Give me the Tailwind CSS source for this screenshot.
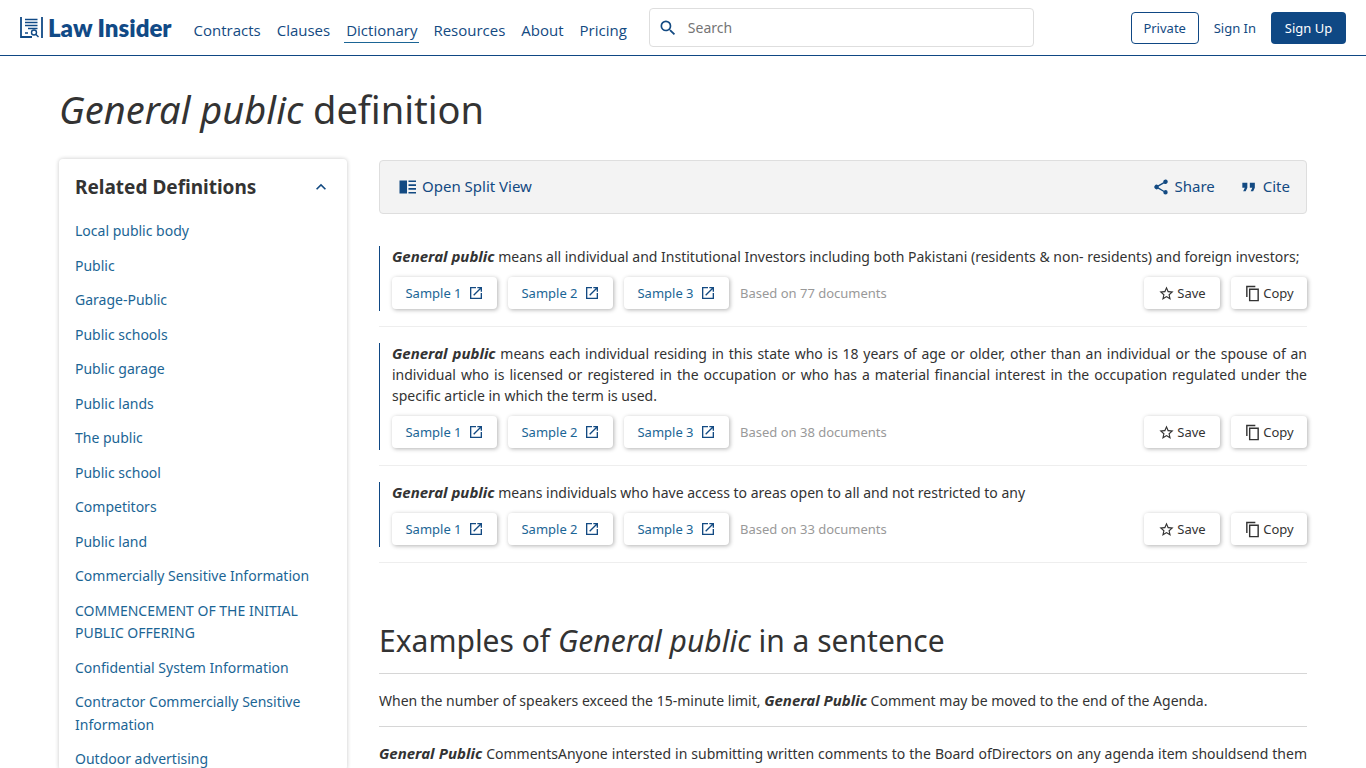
<!DOCTYPE html>
<html lang="en">
<head>
    <meta charset="UTF-8">
    <meta name="viewport" content="width=device-width, initial-scale=1.0">
    <title>General public Definition | Law Insider</title>
    <script src="https://cdn.jsdelivr.net/npm/@tailwindcss/browser@4"></script>
</head>
<body class="bg-white text-[#333] text-sm font-['Noto_Sans',sans-serif] h-screen overflow-hidden">

    <!-- Icons -->
    <svg class="hidden">
        <symbol id="icon-open" viewBox="0 0 24 24"><path d="M19 19H5V5h7V3H3v18h18v-9h-2v7zM14 3v2h3.600l-9.800 9.800 1.400 1.400L19 6.400V10h2V3h-7z"/></symbol>
        <symbol id="icon-star" viewBox="0 0 24 24"><path d="M22 9.240l-7.190-.62L12 2 9.190 8.630 2 9.240l5.460 4.730L5.820 21 12 17.270 18.180 21l-1.630-7.030L22 9.240zM12 15.400l-3.760 2.270 1-4.280-3.320-2.880 4.380-.38L12 6.100l1.710 4.040 4.380.38-3.320 2.880 1 4.280L12 15.400z"/></symbol>
        <symbol id="icon-copy" viewBox="0 0 24 24"><path d="M16 1H3v16h2V3h11V1zm5 4H7v18h14V5zm-2 16H9V7h10v14z"/></symbol>
    </svg>

    <header class="h-14 border-b border-[#0f4884] flex items-start text-[#134a82]">
        <a href="#" class="flex items-center ml-5 mt-3 h-8 text-[#114a86]">
            <svg class="w-6 h-6" viewBox="0 0 24 24" fill="none" stroke="currentColor">
                <path d="M1 1v20h11M22 1v21" stroke-width="1.800"/>
                <path d="M5 3.500h12.500M5 6.500h12.500M5 9.500h12.500M8 12.500h9.500M5 17h3" stroke-width="1.300"/>
                <circle cx="14" cy="16.500" r="2.500" stroke-width="1.400"/>
                <path d="M16 18.500l2.500 2.500" stroke-width="1.400"/>
            </svg>
            <span class="ml-1 text-2xl font-extrabold font-['Lato',sans-serif]">Law Insider</span>
        </a>
        <nav class="flex gap-3 ml-5 mt-[18px] text-[15px] leading-6 font-['Open_Sans',sans-serif]">
            <a href="#" class="px-[2px]">Contracts</a>
            <a href="#" class="px-[2px]">Clauses</a>
            <a href="#" class="px-[2px] border-b border-[#1b6595]">Dictionary</a>
            <a href="#" class="px-[2px]">Resources</a>
            <a href="#" class="px-[2px]">About</a>
            <a href="#" class="px-[2px]">Pricing</a>
        </nav>
        <label class="ml-5 mt-2 w-[385px] h-[39px] border border-[#dedede] rounded flex items-center">
            <svg class="w-5 h-5 ml-2" viewBox="0 0 24 24" fill="currentColor"><path d="M15.500 14h-.79l-.28-.27A6.470 6.470 0 0 0 16 9.500 6.500 6.500 0 1 0 9.500 16c1.610 0 3.090-.59 4.230-1.570l.27.28v.79l5 4.990L20.490 19l-4.990-5zm-6 0C7.010 14 5 11.990 5 9.500S7.010 5 9.500 5 14 7.010 14 9.500 11.990 14 9.500 14z"/></svg>
            <input type="text" aria-label="Search" placeholder="Search" class="ml-[10px] flex-1 text-sm outline-none placeholder:text-[#757575]">
        </label>
        <div class="flex items-center ml-auto mr-5 mt-3 text-[13px]">
            <button class="h-8 w-[68px] border border-[#0f4884] rounded">Private</button>
            <a href="#" class="mx-[15px]">Sign In</a>
            <button class="h-8 w-[75px] rounded bg-[#0f4884] text-white">Sign Up</button>
        </div>
    </header>

    <main class="max-w-[1280px] mx-auto px-4">
        <h1 class="mt-[27px] text-[38px] leading-[52px]"><em>General public</em> definition</h1>

        <div class="mt-6 flex items-start gap-8">
            <!-- Related definitions -->
            <aside class="w-72 shrink-0 rounded px-4 pt-3 shadow-[0_0_4px_rgba(0,0,0,0.22)]">
                <div class="flex items-center justify-between">
                    <h2 class="text-[19px] leading-8 font-bold">Related Definitions</h2>
                    <button aria-label="Collapse" class="text-[#134a82]">
                        <svg class="w-5 h-5" viewBox="0 0 24 24" fill="currentColor"><path d="M12 8l-6 6 1.410 1.410L12 10.830l4.590 4.580L18 14z"/></svg>
                    </button>
                </div>
                <ul class="mt-4 grid gap-3 text-[15px] leading-normal text-[#1b6595]">
                    <li><a href="#" class="text-sm">Local public body</a></li>
                    <li><a href="#" class="text-sm">Public</a></li>
                    <li><a href="#" class="text-sm">Garage-Public</a></li>
                    <li><a href="#" class="text-sm">Public schools</a></li>
                    <li><a href="#" class="text-sm">Public garage</a></li>
                    <li><a href="#" class="text-sm">Public lands</a></li>
                    <li><a href="#" class="text-sm">The public</a></li>
                    <li><a href="#" class="text-sm">Public school</a></li>
                    <li><a href="#" class="text-sm">Competitors</a></li>
                    <li><a href="#" class="text-sm">Public land</a></li>
                    <li><a href="#" class="text-sm">Commercially Sensitive Information</a></li>
                    <li><a href="#" class="text-sm">COMMENCEMENT OF THE INITIAL PUBLIC OFFERING</a></li>
                    <li><a href="#" class="text-sm">Confidential System Information</a></li>
                    <li><a href="#" class="text-sm">Contractor Commercially Sensitive Information</a></li>
                    <li><a href="#" class="text-sm">Outdoor advertising</a></li>
                </ul>
            </aside>

            <section class="flex-1 min-w-0 pt-px">
                <!-- Toolbar -->
                <div class="h-[54px] px-4 border border-[#dedede] rounded bg-[#f3f3f3] text-[#134a82] flex items-center text-[15px]">
                    <button class="flex items-center gap-1 ml-[2px]">
                        <svg class="w-5 h-5" viewBox="0 0 20 20" fill="currentColor"><path d="M1.500 3.500H9v13H1.500zM10.500 3.500H18V5h-7.500zM10.500 7.300H18v1.600h-7.500zM10.500 11.100H18v1.600h-7.500zM10.500 15H18v1.500h-7.500z"/></svg>
                        Open Split View
                    </button>
                    <button class="flex items-center gap-1 ml-auto">
                        <svg class="w-[18px] h-[18px]" viewBox="0 0 24 24" fill="currentColor"><path d="M18 16.080c-.76 0-1.440.3-1.960.77L8.910 12.700c.05-.23.09-.46.09-.7s-.04-.47-.09-.7l7.050-4.110A3 3 0 1 0 15 5c0 .24.04.47.09.7L8.040 9.810a3 3 0 1 0 0 4.380l7.120 4.160c-.05.21-.08.43-.08.650a2.920 2.920 0 1 0 2.920-2.920z"/></svg>
                        Share
                    </button>
                    <button class="flex items-center gap-1 ml-6">
                        <svg class="w-5 h-5" viewBox="0 0 24 24" fill="currentColor"><path d="M5 17h3l2-4V7H4v6h3zm9 0h3l2-4V7h-6v6h3z"/></svg>
                        Cite
                    </button>
                </div>

                <!-- Definitions -->
                <div class="mt-8 grid gap-4">
                    <article class="border-b border-[#eee] pb-[15px]">
                        <div class="border-l border-[#0f4884] pl-3 pb-[2px]">
                            <p class="leading-[21px] text-justify"><b class="text-[15px] italic">General public</b> means all individual and Institutional Investors including both Pakistani (residents &amp; non- residents) and foreign investors;</p>
                            <div class="mt-[10px] flex items-center gap-[11px] text-[13px]">
                                <a href="#" class="w-[105px] h-8 rounded shadow-[1px_1px_4px_rgba(0,0,0,0.3)] flex items-center justify-center gap-[6px] text-[#1b6595]">Sample 1 <svg class="w-4 h-4 fill-[#134a82]"><use href="#icon-open"/></svg></a>
                                <a href="#" class="w-[105px] h-8 rounded shadow-[1px_1px_4px_rgba(0,0,0,0.3)] flex items-center justify-center gap-[6px] text-[#1b6595]">Sample 2 <svg class="w-4 h-4 fill-[#134a82]"><use href="#icon-open"/></svg></a>
                                <a href="#" class="w-[105px] h-8 rounded shadow-[1px_1px_4px_rgba(0,0,0,0.3)] flex items-center justify-center gap-[6px] text-[#1b6595]">Sample 3 <svg class="w-4 h-4 fill-[#134a82]"><use href="#icon-open"/></svg></a>
                                <span class="text-[#999]">Based on 77 documents</span>
                                <button class="ml-auto w-[76px] h-8 rounded shadow-[1px_1px_4px_rgba(0,0,0,0.3)] flex items-center justify-center gap-[2px]"><svg class="w-[17px] h-[17px] fill-[#333]"><use href="#icon-star"/></svg>Save</button>
                                <button class="w-[76px] h-8 rounded shadow-[1px_1px_4px_rgba(0,0,0,0.3)] flex items-center justify-center gap-[2px]"><svg class="w-[17px] h-[17px] fill-[#333]"><use href="#icon-copy"/></svg>Copy</button>
                            </div>
                        </div>
                    </article>
                    <article class="border-b border-[#eee] pb-[15px]">
                        <div class="border-l border-[#0f4884] pl-3 pb-[2px]">
                            <p class="leading-[21px] text-justify"><b class="text-[15px] italic">General public</b> means each individual residing in this state who is 18 years of age or older, other than an individual or the spouse of an individual who is licensed or registered in the occupation or who has a material financial interest in the occupation regulated under the specific article in which the term is used.</p>
                            <div class="mt-[10px] flex items-center gap-[11px] text-[13px]">
                                <a href="#" class="w-[105px] h-8 rounded shadow-[1px_1px_4px_rgba(0,0,0,0.3)] flex items-center justify-center gap-[6px] text-[#1b6595]">Sample 1 <svg class="w-4 h-4 fill-[#134a82]"><use href="#icon-open"/></svg></a>
                                <a href="#" class="w-[105px] h-8 rounded shadow-[1px_1px_4px_rgba(0,0,0,0.3)] flex items-center justify-center gap-[6px] text-[#1b6595]">Sample 2 <svg class="w-4 h-4 fill-[#134a82]"><use href="#icon-open"/></svg></a>
                                <a href="#" class="w-[105px] h-8 rounded shadow-[1px_1px_4px_rgba(0,0,0,0.3)] flex items-center justify-center gap-[6px] text-[#1b6595]">Sample 3 <svg class="w-4 h-4 fill-[#134a82]"><use href="#icon-open"/></svg></a>
                                <span class="text-[#999]">Based on 38 documents</span>
                                <button class="ml-auto w-[76px] h-8 rounded shadow-[1px_1px_4px_rgba(0,0,0,0.3)] flex items-center justify-center gap-[2px]"><svg class="w-[17px] h-[17px] fill-[#333]"><use href="#icon-star"/></svg>Save</button>
                                <button class="w-[76px] h-8 rounded shadow-[1px_1px_4px_rgba(0,0,0,0.3)] flex items-center justify-center gap-[2px]"><svg class="w-[17px] h-[17px] fill-[#333]"><use href="#icon-copy"/></svg>Copy</button>
                            </div>
                        </div>
                    </article>
                    <article class="border-b border-[#eee] pb-[15px]">
                        <div class="border-l border-[#0f4884] pl-3 pb-[2px]">
                            <p class="leading-[21px] text-justify"><b class="text-[15px] italic">General public</b> means individuals who have access to areas open to all and not restricted to any</p>
                            <div class="mt-[10px] flex items-center gap-[11px] text-[13px]">
                                <a href="#" class="w-[105px] h-8 rounded shadow-[1px_1px_4px_rgba(0,0,0,0.3)] flex items-center justify-center gap-[6px] text-[#1b6595]">Sample 1 <svg class="w-4 h-4 fill-[#134a82]"><use href="#icon-open"/></svg></a>
                                <a href="#" class="w-[105px] h-8 rounded shadow-[1px_1px_4px_rgba(0,0,0,0.3)] flex items-center justify-center gap-[6px] text-[#1b6595]">Sample 2 <svg class="w-4 h-4 fill-[#134a82]"><use href="#icon-open"/></svg></a>
                                <a href="#" class="w-[105px] h-8 rounded shadow-[1px_1px_4px_rgba(0,0,0,0.3)] flex items-center justify-center gap-[6px] text-[#1b6595]">Sample 3 <svg class="w-4 h-4 fill-[#134a82]"><use href="#icon-open"/></svg></a>
                                <span class="text-[#999]">Based on 33 documents</span>
                                <button class="ml-auto w-[76px] h-8 rounded shadow-[1px_1px_4px_rgba(0,0,0,0.3)] flex items-center justify-center gap-[2px]"><svg class="w-[17px] h-[17px] fill-[#333]"><use href="#icon-star"/></svg>Save</button>
                                <button class="w-[76px] h-8 rounded shadow-[1px_1px_4px_rgba(0,0,0,0.3)] flex items-center justify-center gap-[2px]"><svg class="w-[17px] h-[17px] fill-[#333]"><use href="#icon-copy"/></svg>Copy</button>
                            </div>
                        </div>
                    </article>
                </div>

                <!-- Examples -->
                <h2 class="mt-14 pb-[10px] border-b border-[#d6d6d6] text-3xl leading-[44px]">Examples of <em>General public</em> in a sentence</h2>
                <p class="pt-4 pb-[15px] border-b border-[#d6d6d6] leading-[21px] text-justify">When the number of speakers exceed the 15-minute limit, <b class="text-[15px] italic">General Public</b> Comment may be moved to the end of the Agenda.</p>
                <p class="pt-4 pb-[15px] leading-[21px] text-justify [text-align-last:justify]"><b class="text-[15px] italic">General Public</b> CommentsAnyone intersted in submitting written comments to the Board ofDirectors on any agenda item shouldsend them</p>
            </section>
        </div>
    </main>

</body>
</html>
